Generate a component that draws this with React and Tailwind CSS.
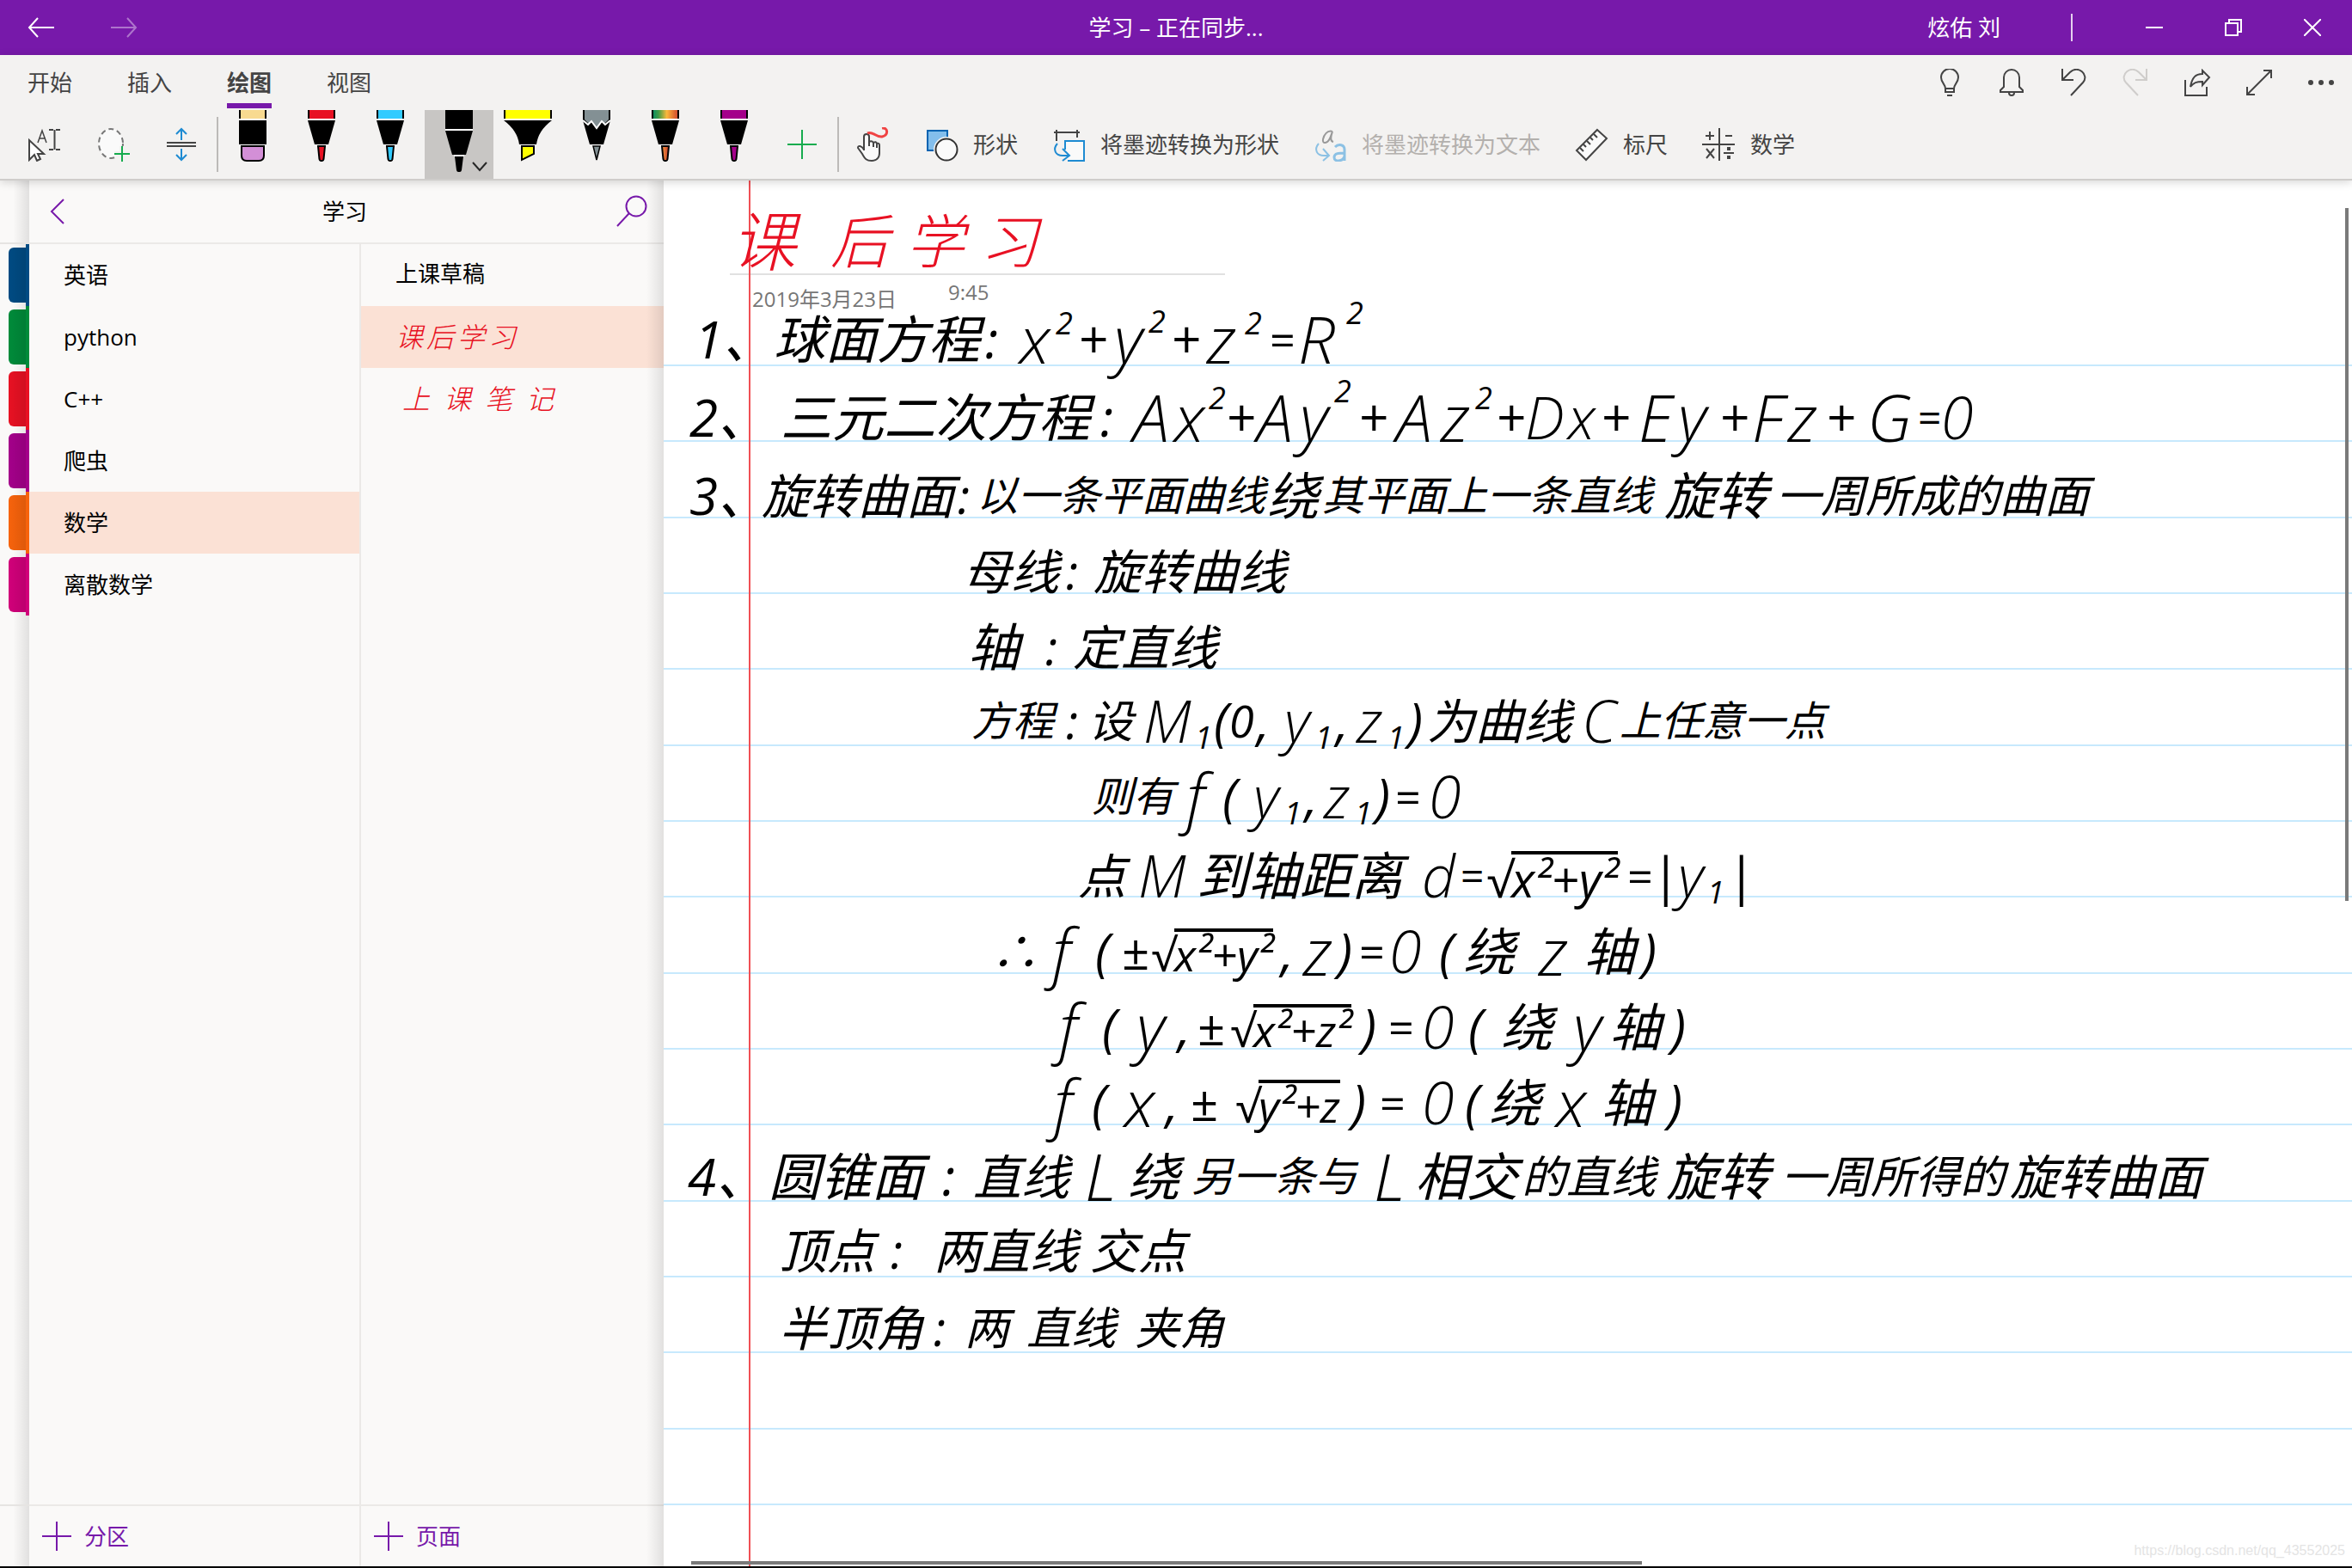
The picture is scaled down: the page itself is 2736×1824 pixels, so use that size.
import { useState } from 'react'
import clsx from 'clsx'

const uiFont = "font-['Open_Sans','Noto_Sans_CJK_SC',sans-serif]"

const ribbonTabs = ['开始', '插入', '绘图', '视图']

const sections = [
  { name: '英语', tab: 'bg-[#004b83]' },
  { name: 'python', tab: 'bg-[#008b3a]' },
  { name: 'C++', tab: 'bg-[#e81123]' },
  { name: '爬虫', tab: 'bg-[#a4008a]' },
  { name: '数学', tab: 'bg-[#f7630c]' },
  { name: '离散数学', tab: 'bg-[#d1007a]' },
]

// Ink is stored in window coordinates, the canvas starts below the ribbon
const canvasOrigin = { x: 772, y: 210 }

const inkSizes = {
  36: 'text-[36px]',
  48: 'text-[48px]',
  52: 'text-[52px]',
  56: 'text-[56px]',
  60: 'text-[60px]',
  68: 'text-[68px] font-light',
  76: 'text-[76px] font-light',
}

const titleInk = [
  { y: 280, items: [[850, '课', 76], [966, '后', 68], [1054, '学', 68], [1140, '习', 68]] },
]

// items: [x, text, size, vertical shift]
const noteInk = [
  {
    y: 394,
    items: [
      [808, '1、', 60], [900, '球面方程', 60], [1146, ':', 60], [1186, 'x', 76], [1228, '2', 36, -18],
      [1254, '+', 60], [1296, 'y', 76], [1336, '2', 36, -20], [1362, '+', 60], [1404, 'z', 76],
      [1448, '2', 36, -18], [1476, '=', 52], [1510, 'R', 76], [1566, '2', 36, -30],
    ],
  },
  {
    y: 485,
    items: [
      [802, '2、', 60], [908, '三元二次方程', 60], [1280, ':', 60], [1318, 'A', 76], [1366, 'x', 76],
      [1406, '2', 36, -22], [1426, '+', 60], [1462, 'A', 76], [1512, 'y', 76], [1552, '2', 36, -30],
      [1580, '+', 60], [1624, 'A', 76], [1676, 'z', 76], [1716, '2', 36, -22], [1740, '+', 60],
      [1774, 'D', 68], [1824, 'x', 68], [1862, '+', 60], [1906, 'E', 76], [1952, 'y', 76],
      [2000, '+', 60], [2038, 'F', 76], [2080, 'z', 76], [2124, '+', 60], [2172, 'G', 76],
      [2230, '=', 48], [2258, '0', 68],
    ],
  },
  {
    y: 576,
    items: [
      [802, '3、', 60], [886, '旋转曲面', 56], [1114, ':', 56], [1136, '以一条平面曲线', 48], [1474, '绕', 60],
      [1538, '其平面上一条直线', 48], [1936, '旋转', 60], [2066, '一周所成的曲面', 52],
    ],
  },
  { y: 664, items: [[1120, '母线', 56], [1240, ':', 56], [1272, '旋转曲线', 56]] },
  { y: 752, items: [[1126, '轴', 60], [1216, ':', 56], [1248, '定直线', 56]] },
  {
    y: 838,
    items: [
      [1130, '方程', 48], [1240, ':', 56], [1266, '设', 52], [1330, 'M', 68], [1390, '1', 36, 20],
      [1412, '(', 60], [1430, '0', 52], [1462, ',', 60], [1494, 'y', 68], [1530, '1', 36, 20],
      [1554, ',', 60], [1578, 'z', 68], [1614, '1', 36, 20], [1638, ')', 60], [1660, '为曲线', 56],
      [1840, 'C', 68], [1884, '上任意一点', 48],
    ],
  },
  {
    y: 926,
    items: [
      [1270, '则有', 48], [1380, 'f', 76], [1422, '(', 60], [1458, 'y', 68], [1494, '1', 36, 20],
      [1518, ',', 60], [1540, 'z', 68], [1576, '1', 36, 20], [1600, ')', 60], [1622, '=', 52], [1662, '0', 68],
    ],
  },
  {
    y: 1018,
    items: [
      [1254, '点', 56], [1324, 'M', 68], [1392, '到轴距离', 60], [1654, 'd', 68], [1698, '=', 48],
      [1892, '=', 52], [1920, '|', 60], [1952, 'y', 68], [1986, '1', 36, 20], [2008, '|', 60],
    ],
    root: { x: 1728, text: 'x²+y²', size: 56 },
  },
  {
    y: 1106,
    items: [
      [1152, '∴', 56], [1224, 'f', 76], [1274, '(', 60], [1304, '±', 56], [1490, ',', 60],
      [1516, 'z', 76], [1556, ')', 60], [1580, '=', 52], [1616, '0', 68], [1674, '(', 60],
      [1702, '绕', 60], [1790, 'z', 76], [1842, '轴', 60], [1910, ')', 60],
    ],
    root: { x: 1338, text: 'x²+y²', size: 52 },
  },
  {
    y: 1194,
    items: [
      [1232, 'f', 76], [1282, '(', 60], [1322, 'y', 76], [1370, ',', 60], [1392, '±', 56],
      [1584, ')', 60], [1614, '=', 52], [1654, '0', 68], [1708, '(', 60], [1746, '绕', 60],
      [1830, 'y', 76], [1872, '轴', 60], [1944, ')', 60],
    ],
    root: { x: 1430, text: 'x²+z²', size: 52 },
  },
  {
    y: 1282,
    items: [
      [1226, 'f', 76], [1270, '(', 60], [1308, 'x', 76], [1356, ',', 60], [1384, '±', 56],
      [1572, ')', 60], [1604, '=', 52], [1654, '0', 68], [1704, '(', 60], [1732, '绕', 60],
      [1810, 'x', 76], [1862, '轴', 60], [1940, ')', 60],
    ],
    root: { x: 1436, text: 'y²+z', size: 52 },
  },
  {
    y: 1368,
    items: [
      [800, '4、', 60], [894, '圆锥面', 60], [1096, ':', 60], [1132, '直线', 56], [1262, 'L', 76],
      [1312, '绕', 60], [1386, '另一条与', 48], [1598, 'L', 76], [1646, '相交', 60], [1770, '的直线', 52],
      [1938, '旋转', 60], [2072, '一周所得的', 52], [2338, '旋转曲面', 56],
    ],
  },
  { y: 1454, items: [[906, '顶点', 56], [1036, ':', 56], [1086, '两直线', 56], [1268, '交点', 56]] },
  { y: 1544, items: [[906, '半顶角', 56], [1086, ':', 56], [1122, '两', 52], [1194, '直线', 52], [1320, '夹角', 52]] },
]

const Icon = ({ size = 40, className, children }) => (
  <svg
    width={size}
    height={size}
    viewBox={`0 0 ${size} ${size}`}
    fill="none"
    stroke="currentColor"
    strokeWidth="2"
    className={clsx('shrink-0', className)}
    aria-hidden="true"
  >
    {children}
  </svg>
)

const Pen = ({ color, tip = color }) => (
  <>
    <path d="M24 0h32v10H24z" fill={color} />
    <path d="M24 0h2v10h-2zM54 0h2v10h-2z" fill="#000" />
    <path d="M24 10h32v2H24zM32 40h16v2H32z" fill="#fff" />
    <path d="M24 12h32l-8 28H32z" fill="#000" />
    <path d="M36 42h8l-1.500 15q-.4 2-1.500 2h-2q-1.100 0-1.500-2z" fill={tip} stroke="#000" strokeWidth="2" />
  </>
)

const pens = [
  {
    label: '橡皮擦',
    art: (
      <>
        <path d="M24 0h32v10H24z" fill="#f8da90" />
        <path d="M24 0h2v10h-2zM54 0h2v10h-2zM24 12h32v28H24z" fill="#000" />
        <path d="M24 10h32v2H24zM24 40h32v2H24z" fill="#fff" />
        <path d="M27 42h26v11q0 6-6 6H33q-6 0-6-6z" fill="#d38fd7" stroke="#000" strokeWidth="2" />
      </>
    ),
  },
  { label: '红色笔', art: <Pen color="#e81123" /> },
  { label: '蓝色笔', art: <Pen color="#31cbff" /> },
  {
    label: '黑色笔',
    selected: true,
    art: (
      <>
        <path d="M24 0h32v22H24zM24 24h32l-8 28H32zM35 54h10l-2 16q-.5 2-2 2h-2q-1.500 0-2-2z" fill="#000" />
        <path d="M24 22h32v2H24zM34 52h12v2H34z" fill="#fff" />
        <path d="m56 61 8 9 8-9" fill="none" stroke="#262626" strokeWidth="2" />
      </>
    ),
  },
  {
    label: '荧光笔',
    art: (
      <>
        <path d="M12 0h56v10H12z" fill="#ffff00" />
        <path d="M12 0h2v10h-2zM66 0h2v10h-2zM12 12h56Q52 24 50 40H30Q28 24 12 12z" fill="#000" />
        <path d="M12 10h56v2H12zM30 40h20v2H30z" fill="#fff" />
        <path d="M33 42v16l14-7v-9z" fill="#ffff00" stroke="#000" strokeWidth="2" />
      </>
    ),
  },
  {
    label: '铅笔',
    art: (
      <>
        <path d="M24 0h32v12l-8 28H32l-8-28z" fill="#000" />
        <path d="M26 0h28v11l-5 5-3-3-6 7-6-7-3 3-5-5z" fill="#839094" />
        <path d="m24 12 6 5 4-4 6 8 6-8 4 4 6-5M35 41h10" fill="none" stroke="#fff" strokeWidth="2" />
        <path d="M36 42h8l-4 16z" fill="#839094" stroke="#000" strokeWidth="1.500" />
      </>
    ),
  },
  { label: '彩虹笔', art: <Pen color="url(#rainbow)" tip="url(#ember)" /> },
  { label: '紫色笔', art: <Pen color="#a4008a" /> },
]

const selectTools = [
  {
    label: '选择对象或键入文本',
    icon: (
      <>
        <path d="M2 15v23l6-6 3 7 4-2-3-6h7z" fill="#fff" />
        <path d="m12 18 5-14 5 14M14 13h7" strokeWidth="1.500" />
        <path d="M25 3h5M33 3h5M25 26h5M33 26h5M31.500 3v23" />
      </>
    ),
  },
  {
    label: '套索选择',
    icon: (
      <>
        <ellipse cx="17" cy="19" rx="14" ry="17" fill="#fafafa" stroke="#777" strokeDasharray="6 4" />
        <path d="M30 22v18M21 31h18" stroke="#f3f2f1" strokeWidth="6" />
        <path d="M30 22v18M21 31h18" stroke="#16ab4e" />
      </>
    ),
  },
  {
    label: '插入空间',
    icon: (
      <>
        <path d="M2 18h34M2 22h34" />
        <path d="M19 15V2M13 8l6-6 6 6M19 25v13M13 32l6 6 6-6" stroke="#1e8bd2" />
      </>
    ),
  },
]

const inkActions = [
  {
    label: '形状',
    icon: (
      <>
        <path d="M3 4h23v23H3z" fill="#83beec" stroke="#0063b1" />
        <circle cx="25" cy="26" r="15" fill="#f3f2f1" stroke="none" />
        <circle cx="25" cy="26" r="12.500" fill="#fafafa" stroke="#333" />
      </>
    ),
  },
  {
    label: '将墨迹转换为形状',
    icon: (
      <>
        <path d="M2 6h30M5 3v13M29 3v9" />
        <path d="M15 26V16h22v23H18" fill="#fafafa" stroke="#1e8bd2" />
        <path d="M6 19c-6 7-2 14 6 14h7M12 25l8 8-8 6" stroke="#1e8bd2" />
      </>
    ),
  },
  {
    label: '将墨迹转换为文本',
    disabled: true,
    icon: (
      <>
        <path
          d="M22 5c-6-2-10 4-11 9-1 6 5 5 8-1l3-8c-2 6-3 11 1 12"
          stroke="#999"
        />
        <path d="M6 19c-6 7-2 14 6 14h6M11 25l7 8-7 6" stroke="#8cc1e4" />
        <path d="M25 23c4-4 11-3 11 3v13M36 30c-6 0-12 0-12 5 0 6 10 5 12-1" stroke="#8cc1e4" strokeWidth="3" />
      </>
    ),
  },
  {
    label: '标尺',
    icon: (
      <>
        <path d="M26 3 37 13 13 38 2 27z" fill="#fafafa" />
        <path d="m22 8 4 4M18 12l3 3M14 16l4 4M10 20l3 3M6 24l4 4" />
      </>
    ),
  },
  {
    label: '数学',
    icon: (
      <>
        <path d="M20 1v38M0 20h38M4 10h10M9 5v10M27 10h8M5 25l9 11M14 25 5 36M25 30h12" />
        <path d="M31 23v4M31 33v4" strokeWidth="4" />
      </>
    ),
  },
]

const quickActions = [
  {
    label: '操作说明',
    icon: <path d="M11 23c0-5-5-7-5-13a10 10 0 0 1 20 0c0 6-5 8-5 13v4H11zM11 23h10M13 31h6" />,
  },
  {
    label: '通知',
    icon: <path d="M3 27v-2l4-4V10a9 9 0 0 1 18 0v11l4 4v2zM13 28a3 3 0 0 0 6 0" />,
  },
  { label: '撤消', icon: <path d="M3 0v13h13M3 13 12 4c9-9 23 3 15 12L13 31" /> },
  {
    label: '恢复',
    disabled: true,
    icon: <path d="M29 0v13H16M29 13 20 4C11-5-3 7 5 16l14 15" />,
  },
  {
    label: '共享',
    icon: <path d="M2 13v18h25V21M8 21C10 10 14 6 22 6V2l8 8-8 9v-4c-7 0-10 1-14 6z" />,
  },
  { label: '全屏', icon: <path d="M2 30 30 2M21 2h9v9M2 21v9h9" /> },
  {
    label: '更多',
    icon: (
      <g fill="currentColor" stroke="none">
        <circle cx="4" cy="16" r="3" />
        <circle cx="16" cy="16" r="3" />
        <circle cx="28" cy="16" r="3" />
      </g>
    ),
  },
]

const windowButtons = [
  { label: '最小化', icon: <path d="M0 10h20" /> },
  { label: '还原', icon: <path d="M1 5h14v14H1zM5 5V1h14v14h-4" /> },
  { label: '关闭', icon: <path d="m0 0 20 20M20 0 0 20" /> },
]

const InkLine = ({ line }) => (
  <p>
    {line.items.map(([x, text, size, shift = 0]) => (
      <span
        key={x}
        className={clsx('absolute whitespace-nowrap leading-none', inkSizes[size])}
        style={{ left: x - canvasOrigin.x, top: line.y + shift - size / 2 - canvasOrigin.y }}
      >
        {text}
      </span>
    ))}
    {line.root && (
      <span
        className={clsx('absolute flex items-end whitespace-nowrap leading-none', inkSizes[line.root.size])}
        style={{ left: line.root.x - canvasOrigin.x, top: line.y - line.root.size / 2 - canvasOrigin.y }}
      >
        √<span className="border-t-4 border-black">{line.root.text}</span>
      </span>
    )}
  </p>
)

const TitleBar = () => (
  <header className="grid h-16 grid-cols-[1fr_auto_1fr] items-center bg-[#7719aa] text-white">
    <div className="flex">
      <button aria-label="后退" className="flex h-16 w-24 items-center justify-center">
        <Icon size={32}>
          <path d="M31 16H2M12 5 2 16l10 11" />
        </Icon>
      </button>
      <button aria-label="前进" disabled className="flex h-16 w-24 items-center justify-center opacity-40">
        <Icon size={32}>
          <path d="M1 16h29M20 5l10 11-10 11" />
        </Icon>
      </button>
    </div>
    <h1>学习 – 正在同步...</h1>
    <div className="flex items-center justify-end">
      <button>炫佑 刘</button>
      <span className="mr-[49px] ml-[82px] h-8 w-[2px] bg-white/80" />
      {windowButtons.map((button) => (
        <button key={button.label} aria-label={button.label} className="flex h-16 w-[92px] items-center justify-center">
          <Icon size={20}>{button.icon}</Icon>
        </button>
      ))}
    </div>
  </header>
)

const Ribbon = () => {
  const [activeTab, setActiveTab] = useState('绘图')

  return (
    <div className="relative z-10 border-b-2 border-[#cfcdcb] bg-[#f3f2f1] text-[#444] shadow-[0_2px_10px_rgba(0,0,0,0.16)]">
      <div className="flex h-16 justify-between">
        <nav className="flex gap-16 pl-8">
          {ribbonTabs.map((tab) => (
            <button
              key={tab}
              onClick={() => setActiveTab(tab)}
              className={clsx(
                'h-[62px] border-b-6 pt-2',
                tab === activeTab ? 'border-[#7719aa] font-bold' : 'border-transparent'
              )}
            >
              {tab}
            </button>
          ))}
        </nav>
        <div className="flex">
          {quickActions.map((action) => (
            <button
              key={action.label}
              aria-label={action.label}
              disabled={action.disabled}
              className="flex w-[72px] items-center justify-center disabled:text-[#cfcdcb]"
            >
              <Icon size={32}>{action.icon}</Icon>
            </button>
          ))}
        </div>
      </div>

      <div className="flex h-20 items-center pl-3">
        {selectTools.map((tool) => (
          <button key={tool.label} aria-label={tool.label} className="flex size-20 items-center justify-center">
            <Icon>{tool.icon}</Icon>
          </button>
        ))}
        <span className="h-16 w-[2px] bg-[#bcbab8]" />
        {pens.map((pen) => (
          <button key={pen.label} aria-label={pen.label} className={clsx('size-20', pen.selected && 'bg-[#c8c6c4]')}>
            <svg width="80" height="80" viewBox="0 0 80 80" aria-hidden="true">
              <defs>
                <linearGradient id="rainbow">
                  <stop offset="0" stopColor="#008b6a" />
                  <stop offset="0.25" stopColor="#3f9b45" />
                  <stop offset="0.55" stopColor="#fbb83c" />
                  <stop offset="1" stopColor="#cc3b2c" />
                </linearGradient>
                <linearGradient id="ember">
                  <stop offset="0" stopColor="#f39a3c" />
                  <stop offset="1" stopColor="#c83a2a" />
                </linearGradient>
              </defs>
              {pen.art}
            </svg>
          </button>
        ))}
        <button aria-label="添加笔" className="flex size-20 items-center justify-center text-[#16ab4e]">
          <Icon>
            <path d="M19 3v34M2 20h34" />
          </Icon>
        </button>
        <span className="h-16 w-[2px] bg-[#bcbab8]" />
        <button aria-label="用触摸绘图" className="flex size-20 items-center justify-center">
          <Icon>
            <path
              d="M9 27V11q0-3 3-3t3 3v11-5q3-2 5 1 3-2 4 1 3-1 3 2v9c0 6-4 9-9 9-7 0-8-3-11-8l-5-7c0-3 4-3 7 2zM20 18v5M24 19v5"
              fill="#fafafa"
            />
            <path d="M13 7c6-3 10 5 17 4 8-2 7-11 0-10" stroke="#f04343" strokeWidth="3" />
          </Icon>
        </button>
        {inkActions.map((action) => (
          <button
            key={action.label}
            disabled={action.disabled}
            className="flex h-20 items-center gap-4 px-5 disabled:text-[#b3b0ad]"
          >
            <Icon>{action.icon}</Icon>
            {action.label}
          </button>
        ))}
      </div>
    </div>
  )
}

const AddButton = ({ children }) => (
  <button className="flex h-[72px] w-full items-center gap-3 border-t-2 border-[#ebe9e7] pl-3 text-[#7719aa]">
    <Icon>
      <path d="M20 3v34M3 20h34" />
    </Icon>
    {children}
  </button>
)

const SectionStrip = () => (
  <div className="flex w-[34px] flex-col bg-linear-to-r from-transparent from-45% to-black/10">
    <div className="h-[74px] border-b-2 border-[#e6e4e2]" />
    {sections.map((section) => (
      <div key={section.name} className="flex h-[72px] items-center justify-end">
        <span className={clsx('h-16 w-5 rounded-l-md', section.tab)}>
          <span className="block size-full rounded-l-md bg-linear-to-r from-transparent to-black/10" />
        </span>
        <span className={clsx('h-full w-1', section.tab)} />
      </div>
    ))}
    <div className="mt-auto h-[72px] border-t-2 border-[#e6e4e2]" />
  </div>
)

const Sidebar = () => {
  const [section, setSection] = useState('数学')

  return (
    <aside className="relative flex w-[738px] flex-col bg-[#faf9f8] text-black">
      <div className="flex h-[74px] items-center justify-between border-b-2 border-[#ebe9e7] pr-4 pl-3">
        <button aria-label="返回" className="text-[#7719aa]">
          <Icon>
            <path d="M28 6 14 20l14 14" />
          </Icon>
        </button>
        <h2>学习</h2>
        <button aria-label="搜索" className="text-[#7719aa]">
          <Icon>
            <circle cx="24" cy="14" r="11.500" />
            <path d="M16 22 2 37" />
          </Icon>
        </button>
      </div>
      <div className="flex flex-1">
        <div className="flex w-[386px] flex-col justify-between border-r-2 border-[#ebe9e7]">
          <ul>
            {sections.map(({ name }) => (
              <li key={name}>
                <button
                  onClick={() => setSection(name)}
                  className={clsx('h-[72px] w-full pl-10 text-left', name === section && 'bg-[#fbe1d5]')}
                >
                  {name}
                </button>
              </li>
            ))}
          </ul>
          <AddButton>分区</AddButton>
        </div>
        <div className="flex flex-1 flex-col justify-between">
          <ul>
            <li>
              <button className="h-[72px] w-full pb-1 pl-10 text-left">上课草稿</button>
            </li>
            <li>
              <button className="flex h-[72px] w-full items-center gap-1 bg-[#fbe1d5] pl-10 text-[32px] font-light text-[#e81123] italic">
                <span>课</span>
                <span>后</span>
                <span>学</span>
                <span>习</span>
              </button>
            </li>
            <li>
              <button className="flex h-[72px] w-full items-center gap-4 pl-12 text-[32px] font-light text-[#e81123] italic">
                <span>上</span>
                <span>课</span>
                <span>笔</span>
                <span>记</span>
              </button>
            </li>
          </ul>
          <AddButton>页面</AddButton>
        </div>
      </div>
      <div className="pointer-events-none absolute inset-y-0 right-0 w-5 bg-linear-to-r from-transparent to-black/10" />
    </aside>
  )
}

const Canvas = () => (
  <main className="relative min-w-0 flex-1 overflow-hidden bg-white">
    {/* Ruled paper */}
    <div className="absolute inset-0 overflow-hidden">
      <div className="h-[216px] border-b-2 border-[#c7e9fd]" />
      {Array.from({ length: 15 }, (_, row) => (
        <div key={row} className={clsx('border-b-2 border-[#c7e9fd]', row % 3 === 1 ? 'h-[89px]' : 'h-[88px]')} />
      ))}
    </div>
    <div className="absolute inset-y-0 left-[99px] w-[2px] bg-[#f05055]" />

    {/* Page title with its date */}
    <div className="ml-[77px] h-[110px] w-[576px] border-b-2 border-[#e1e1e1]" />
    <div className="relative flex items-start gap-[60px] pt-1 pl-[103px] text-2xl text-[#767676]">
      <time dateTime="2019-03-23" className="pt-2">2019年3月23日</time>
      <time dateTime="09:45">9:45</time>
    </div>

    {/* Ink layer */}
    <div className="absolute inset-0 text-[#e81123] italic">
      {titleInk.map((line) => (
        <InkLine key={line.y} line={line} />
      ))}
    </div>
    <div className="absolute inset-0 text-black italic">
      {noteInk.map((line) => (
        <InkLine key={line.y} line={line} />
      ))}
    </div>

    {/* Scroll bars */}
    <div className="absolute top-8 right-1 h-1/2 w-1 bg-[#7a7a7a]" />
    <div className="absolute bottom-[2px] left-8 h-1 w-[1106px] bg-[#7a7a7a]" />
    <p className="absolute right-2 bottom-2 font-['Liberation_Sans',sans-serif] text-base leading-5 text-[#e4e4e4]">
      https://blog.csdn.net/qq_43552025
    </p>
  </main>
)

const App = () => (
  <div className={clsx('flex h-screen flex-col bg-[#faf9f8] text-[26px] leading-9', uiFont)}>
    <TitleBar />
    <Ribbon />
    <div className="flex min-h-0 flex-1">
      <SectionStrip />
      <Sidebar />
      <Canvas />
    </div>
    <div className="h-[2px] bg-black" />
  </div>
)

export default App
